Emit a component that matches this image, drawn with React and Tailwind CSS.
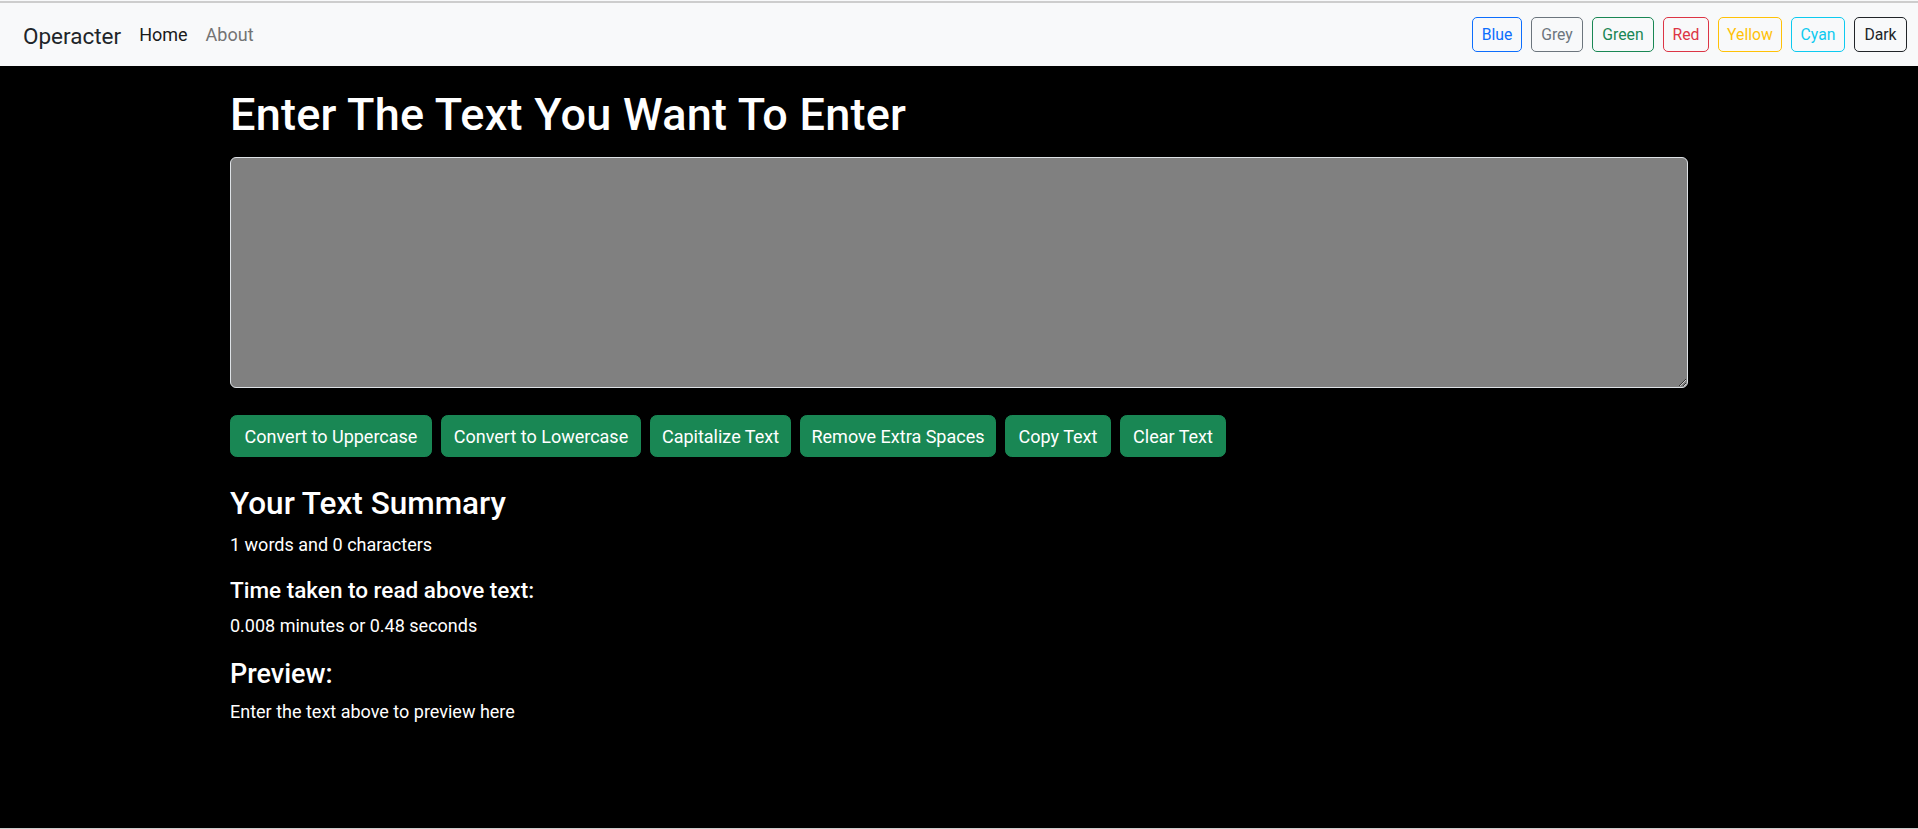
import { useState } from 'react';

const THEMES = [
  { label: 'Blue',   w: 'w-[50px]', cls: 'text-[#0d6efd] border-[#0d6efd]' },
  { label: 'Grey',   w: 'w-[52px]', cls: 'text-[#6c757d] border-[#6c757d]' },
  { label: 'Green',  w: 'w-[62px]', cls: 'text-[#198754] border-[#198754]' },
  { label: 'Red',    w: 'w-[46px]', cls: 'text-[#dc3545] border-[#dc3545]' },
  { label: 'Yellow', w: 'w-[64px]', cls: 'text-[#ffc107] border-[#ffc107]' },
  { label: 'Cyan',   w: 'w-[54px]', cls: 'text-[#0dcaf0] border-[#0dcaf0]' },
  { label: 'Dark',   w: 'w-[53px]', cls: 'text-[#212529] border-[#212529]' },
];

const ACTIONS = [
  { label: 'Convert to Uppercase', w: 'w-[202px]' },
  { label: 'Convert to Lowercase', w: 'w-[200px]' },
  { label: 'Capitalize Text',      w: 'w-[141px]' },
  { label: 'Remove Extra Spaces',  w: 'w-[196px]' },
  { label: 'Copy Text',            w: 'w-[106px]' },
  { label: 'Clear Text',           w: 'w-[106px]' },
];

const Navbar = () => (
  <div className="bg-[#f8f9fa]">
    <div className="h-px" />
    <div className="h-[2px] bg-[#cdcdcd]" />
    <nav className="h-[63px] flex items-center justify-between pl-[23px] pr-[11px]">
      <div className="flex items-center">
        <a href="#" className="text-[22.5px] leading-[34px] pt-[2px] text-[#212529] mr-[9px]">Operacter</a>
        <a href="#" className="text-[18px] leading-[27px] px-[9px] text-[#1a1a1a]">Home</a>
        <a href="#" className="text-[18px] leading-[27px] px-[9px] text-[#737373]">About</a>
      </div>
      <div className="flex items-center gap-[9px]">
        {THEMES.map(t => (
          <button key={t.label}
            className={`h-[35px] border rounded-[5px] text-[15.75px] leading-[23px] text-center whitespace-nowrap bg-transparent ${t.w} ${t.cls}`}>
            {t.label}
          </button>
        ))}
      </div>
    </nav>
  </div>
);

export default function App() {
  const [text, setText] = useState('');

  const words = text.split(' ').length;
  const mins = 0.008 * words;

  return (
    <div className="h-screen flex flex-col bg-black font-[Roboto,sans-serif]">
      <Navbar />

      {/* ── Main ── */}
      <main className="flex-1 text-white">
        <div className="w-[1458px] mx-auto pt-[22px]">
          <h1 className="text-[45px] leading-[54px] font-medium tracking-[0.25px]">Enter The Text You Want To Enter</h1>

          <textarea
            value={text}
            onChange={e => setText(e.target.value)}
            className="block mt-[15px] w-full h-[231px] bg-[#808080] text-white border border-[#dee2e6] rounded-[6px] px-[13.5px] py-[6.75px] text-[18px] leading-[27px] outline-none"
          />

          <div className="mt-[27px] flex gap-[9px]">
            {ACTIONS.map(a => (
              <button key={a.label}
                className={`h-[42px] bg-[#198754] border border-[#198754] rounded-[6.75px] text-white text-[18px] leading-[27px] text-center whitespace-nowrap ${a.w}`}>
                {a.label}
              </button>
            ))}
          </div>

          <h3 className="mt-[28px] text-[31.5px] leading-[38px] font-medium">Your Text Summary</h3>
          <p className="mt-[8px] text-[18px] leading-[27px]">{words} words and {text.length} characters</p>

          <h5 className="mt-[19px] text-[22.5px] leading-[27px] font-medium">Time taken to read above text:</h5>
          <p className="mt-[8px] text-[18px] leading-[27px]">{mins} minutes or {(mins * 60).toFixed(2)} seconds</p>

          <h4 className="mt-[19px] text-[27px] leading-[32px] font-medium">Preview:</h4>
          <p className="mt-[8px] text-[18px] leading-[27px]">{text.length > 0 ? text : 'Enter the text above to preview here'}</p>
        </div>
      </main>

      <div className="h-px bg-[#cdcdcd]" />
    </div>
  );
}
